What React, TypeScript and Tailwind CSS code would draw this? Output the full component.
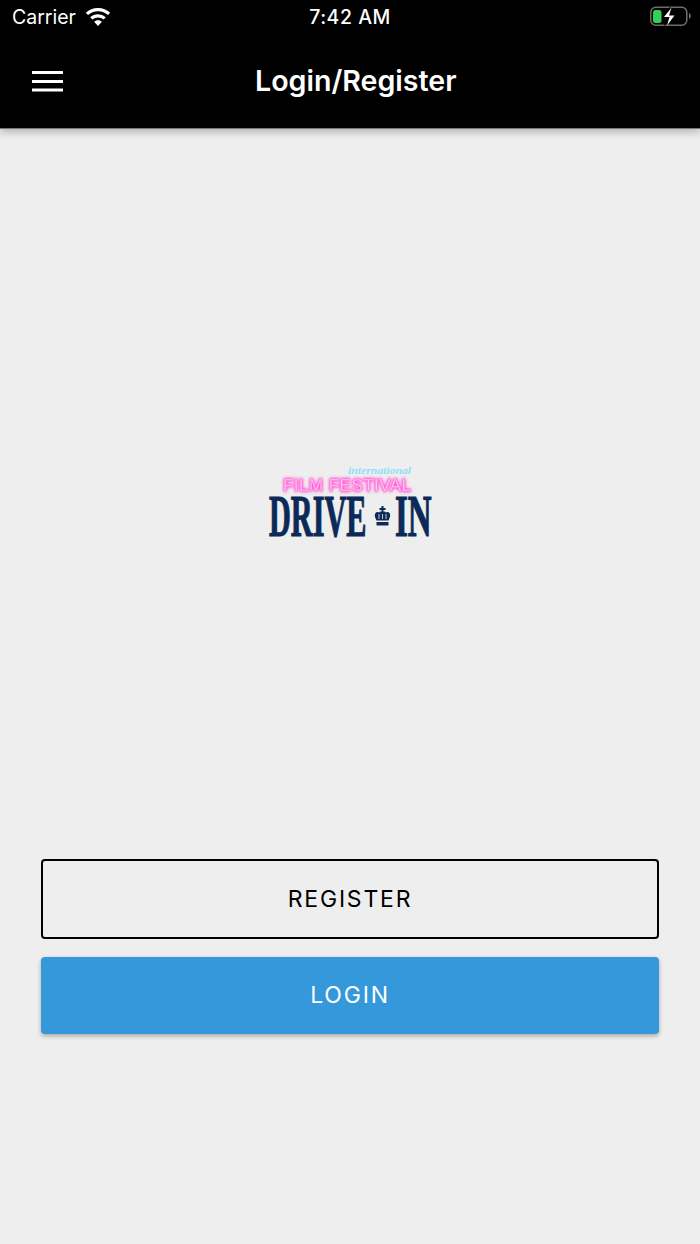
import * as React from "react";

function WifiIcon() {
  return (
    <svg width="26" height="20" viewBox="0 0 26 20" className="block">
      <path d="M13 0C8.300 0 4 1.800 .8 4.800l2.200 2.300A14.600 14.600 0 0 1 13 3.200c3.900 0 7.400 1.500 10 3.900l2.200-2.300A17.800 17.800 0 0 0 13 0z" fill="#fff" />
      <path d="M13 6.200c-3 0-5.700 1.100-7.800 3l2.200 2.300A8.500 8.500 0 0 1 13 9.400c2.200 0 4.100.8 5.600 2.100l2.200-2.300a11.500 11.500 0 0 0-7.800-3z" fill="#fff" />
      <path d="M13 12.300c-1.500 0-2.900.6-3.900 1.500L13 18l3.900-4.200c-1-.9-2.400-1.500-3.900-1.500z" fill="#fff" />
    </svg>
  );
}

function BatteryIcon() {
  return (
    <svg width="42" height="24" viewBox="0 0 42 24" className="block">
      <rect x="0.800" y="1.200" width="36" height="18" rx="5" fill="none" stroke="#6e6e6e" strokeWidth="1.500" />
      <rect x="3" y="4" width="8.500" height="13" rx="2.500" fill="#2fd158" />
      <path d="M39 7v6c1.200-.4 1.800-1.600 1.800-3S40.200 7.400 39 7z" fill="#6e6e6e" />
      <path d="M20.500 0 11.500 11.500h5L14 20.500 25 8h-5.500z" fill="#000" />
      <path d="M21.500 1.800 14 11h5.500l-2.500 8.500 7.500-10h-5.500z" fill="#fff" />
    </svg>
  );
}

function MenuIcon() {
  return (
    <svg width="31" height="21" viewBox="0 0 31 21" className="block shrink-0">
      <rect x="0" y="0" width="31" height="3" fill="#fff" />
      <rect x="0" y="9" width="31" height="3" fill="#fff" />
      <rect x="0" y="17.500" width="31" height="3" fill="#fff" />
    </svg>
  );
}

function CrownIcon() {
  return (
    <svg x="107" y="42" width="17" height="20" viewBox="0 0 16 20">
      <path d="M7 0h2v2h2v2H9v2.500H7V4H5V2h2z" fill="#0b2a58" />
      <path d="M8 6c1.500-1 2.800-.6 3.300.6 1.100-.9 3.300-.6 4.100 1.100.9 2-.4 4.300-1.400 6.800H2c-1-2.500-2.300-4.800-1.400-6.800C1.400 6 3.600 5.700 4.700 6.600 5.200 5.400 6.500 5 8 6z" fill="#0b2a58" />
      <path d="M4.500 8v5M8 8v5M11.500 8v5" stroke="#eeeeee" strokeWidth="0.800" />
      <rect x="2" y="16" width="12" height="3.500" rx="0.500" fill="#0b2a58" />
    </svg>
  );
}

function Logo() {
  return (
    <svg width="166" height="78" viewBox="0 0 166 78" className="block">
      <text x="81" y="10" textLength="63" lengthAdjust="spacingAndGlyphs" fill="#8fe0f7" fontFamily="'Liberation Serif', serif" fontStyle="italic" fontWeight="700" fontSize="11">
        international
      </text>
      <text x="16" y="27" textLength="128" lengthAdjust="spacing" fill="#ffc8f0" stroke="#ff86df" strokeWidth="0.400" className="[filter:drop-shadow(0_0_1.500px_#ff3fcf)_drop-shadow(0_0_1px_#ff6fdc)]" fontFamily="'Liberation Sans', sans-serif" fontSize="17">
        FILM FESTIVAL
      </text>
      <text transform="translate(2 72) scale(0.89 1.72)" fill="#0b2a58" stroke="#0b2a58" strokeWidth="0.700" fontFamily="'Liberation Serif', serif" fontWeight="700" fontSize="34">
        DRIVE
      </text>
      <CrownIcon />
      <text transform="translate(128 72) scale(0.97 1.72)" fill="#0b2a58" stroke="#0b2a58" strokeWidth="0.700" fontFamily="'Liberation Serif', serif" fontWeight="700" fontSize="34">
        IN
      </text>
    </svg>
  );
}

export default function App() {
  return (
    <div className="flex h-[1244px] w-[700px] flex-col overflow-hidden bg-[#eeeeee] font-['Inter',sans-serif]">
      <header className="z-10 flex h-[129px] flex-col border-b border-[#777777] bg-black text-white shadow-[0_3px_8px_rgba(0,0,0,0.25)]">
        <div className="grid h-[36px] grid-cols-3 items-center px-3">
          <div className="flex items-center gap-[9px] text-[19.500px]">
            <span>Carrier</span>
            <WifiIcon />
          </div>
          <div className="text-center text-[19.500px] font-medium tracking-[0.5px]">7:42 AM</div>
          <div className="-mr-1 flex justify-end">
            <BatteryIcon />
          </div>
        </div>
        <div className="flex flex-1 items-center pb-[2px] pl-[32px]">
          <MenuIcon />
          <h1 className="ml-[192px] text-[28.600px] font-semibold leading-none">Login/Register</h1>
        </div>
      </header>
      <main className="flex flex-1 flex-col items-center px-[41px]">
        <div className="mt-[335px]">
          <Logo />
        </div>
        <button type="button" className="mt-[317px] h-[80px] w-full rounded-[4px] border-2 border-black text-[23px] tracking-[1.800px] text-black">
          REGISTER
        </button>
        <button type="button" className="mt-[18px] h-[77px] w-full rounded-[4px] bg-[#3498db] text-[23px] tracking-[1.800px] text-white shadow-[0_2px_4px_rgba(0,0,0,0.3)]">
          LOGIN
        </button>
      </main>
    </div>
  );
}
